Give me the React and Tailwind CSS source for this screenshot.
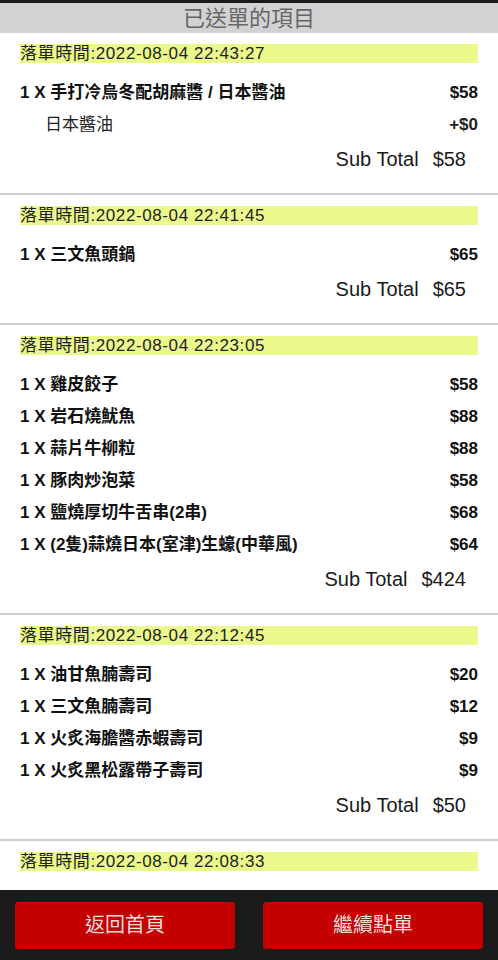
import React from "react";

const orders = [
  {
    time: "2022-08-04 22:43:27",
    items: [
      { name: "手打冷烏冬配胡麻醬 / 日本醬油", price: "$58", options: [{ name: "日本醬油", price: "+$0" }] },
    ],
    total: "$58",
  },
  {
    time: "2022-08-04 22:41:45",
    items: [{ name: "三文魚頭鍋", price: "$65" }],
    total: "$65",
  },
  {
    time: "2022-08-04 22:23:05",
    items: [
      { name: "雞皮餃子", price: "$58" },
      { name: "岩石燒魷魚", price: "$88" },
      { name: "蒜片牛柳粒", price: "$88" },
      { name: "豚肉炒泡菜", price: "$58" },
      { name: "鹽燒厚切牛舌串(2串)", price: "$68" },
      { name: "(2隻)蒜燒日本(室津)生蠔(中華風)", price: "$64" },
    ],
    total: "$424",
  },
  {
    time: "2022-08-04 22:12:45",
    items: [
      { name: "油甘魚腩壽司", price: "$20" },
      { name: "三文魚腩壽司", price: "$12" },
      { name: "火炙海膽醬赤蝦壽司", price: "$9" },
      { name: "火炙黑松露帶子壽司", price: "$9" },
    ],
    total: "$50",
  },
  {
    time: "2022-08-04 22:08:33",
    items: [],
    total: null,
  },
];

function Order({ order, last }) {
  return (
    <div className={last ? "pt-[11px]" : "pt-[11px] pb-[16px] border-b-2 border-[#cfcfcf]"}>
      <div className="mx-[20px] h-[19px] bg-[#eaf88c] text-[17px] leading-[19px] tracking-[0.6px] text-[#1e1e1e]">
        落單時間:{order.time}
      </div>
      {order.items.length > 0 && (
        <div className="mt-[14px]">
          {order.items.map((item, i) => (
            <div key={i}>
              <div className="flex h-8 items-center justify-between px-[20px] text-[17px] font-bold text-[#111]">
                <span>1 X {item.name}</span>
                <span>{item.price}</span>
              </div>
              {item.options &&
                item.options.map((opt, j) => (
                  <div key={j} className="flex h-8 items-center justify-between pl-[45px] pr-[20px] text-[17px] text-[#222]">
                    <span>{opt.name}</span>
                    <span className="font-bold">{opt.price}</span>
                  </div>
                ))}
            </div>
          ))}
        </div>
      )}
      {order.total && (
        <div className="flex h-9 items-center justify-end gap-[14px] pr-[32px] text-[20px] text-[#1a1a1a]">
          <span>Sub Total</span>
          <span>{order.total}</span>
        </div>
      )}
    </div>
  );
}

export default function App() {
  return (
    <div
      className="flex h-screen w-full flex-col overflow-hidden bg-white"
      style={{ fontFamily: '"Liberation Sans", "Noto Sans CJK TC", sans-serif' }}
    >
      <div className="h-[3px] bg-[#1a1a1a]" />
      <div className="flex h-[30px] items-center justify-center bg-[#d2d2d4] text-[22px] text-[#666]">
        已送單的項目
      </div>
      <div className="flex-1 overflow-hidden">
        {orders.map((o, i) => (
          <Order key={i} order={o} last={i === orders.length - 1} />
        ))}
      </div>
      <div className="flex h-[70px] items-center gap-[28px] bg-[#1b1b1b] px-[15px]">
        <button className="flex h-[47px] flex-1 items-center justify-center rounded-[3px] bg-[#c40000] text-[20px] text-[#f6dcdc]">
          返回首頁
        </button>
        <button className="flex h-[47px] flex-1 items-center justify-center rounded-[3px] bg-[#c40000] text-[20px] text-[#f6dcdc]">
          繼續點單
        </button>
      </div>
    </div>
  );
}
